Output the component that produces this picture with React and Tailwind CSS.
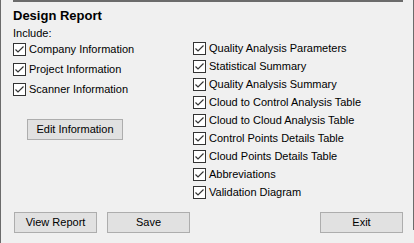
import React from 'react';

const font = { fontFamily: '"Liberation Sans", Arial, sans-serif' };

const Check = ({ label }) => (
  <div className="flex items-center gap-[3px]">
    <span className="flex items-center justify-center w-[13px] h-[13px] border border-[#333333] bg-white shrink-0">
      <svg width="11" height="11" viewBox="0 0 11 11">
        <path d="M1.5 5.5 L4 8 L9.5 2.5" fill="none" stroke="#333333" strokeWidth="1.2" />
      </svg>
    </span>
    <span className="text-[11px] text-black leading-none">{label}</span>
  </div>
);

const Button = ({ children, className }) => (
  <button className={`h-[21px] bg-[#e1e1e1] border border-[#adadad] text-[11px] text-black ${className}`}>
    {children}
  </button>
);

const leftItems = ['Company Information', 'Project Information', 'Scanner Information'];
const rightItems = [
  'Quality Analysis Parameters',
  'Statistical Summary',
  'Quality Analysis Summary',
  'Cloud to Control Analysis Table',
  'Cloud to Cloud Analysis Table',
  'Control Points Details Table',
  'Cloud Points Details Table',
  'Abbreviations',
  'Validation Diagram',
];

export default function App() {
  return (
    <div className="w-[414px] h-[243px] bg-[#f0f0f0] flex border-l border-[#6b6b6b] overflow-hidden" style={font}>
      <div className="flex-1 flex flex-col">
        {/* top rule */}
        <div className="ml-[12px] w-[390px] h-[2px] bg-[#6b6b6b]" />

        <div className="pl-[12px] mt-[6px] text-[13px] font-bold text-black leading-[16px]">Design Report</div>
        <div className="pl-[12px] mt-[4px] text-[11px] text-black leading-[11px]">Include:</div>

        <div className="flex">
          <div className="w-[192px] pl-[12px] flex flex-col">
            {leftItems.map((l) => (
              <div key={l} className="h-[20px] flex items-center">
                <Check label={l} />
              </div>
            ))}
            <Button className="ml-[14px] mt-[20px] w-[96px]">Edit Information</Button>
          </div>
          <div className="flex flex-col">
            {rightItems.map((l) => (
              <div key={l} className="h-[18px] flex items-center">
                <Check label={l} />
              </div>
            ))}
          </div>
        </div>

        <div className="flex mt-[11px] pl-[13px] pr-[10px]">
          <Button className="w-[83px]">View Report</Button>
          <Button className="w-[83px] ml-[10px]">Save</Button>
          <Button className="w-[83px] ml-auto">Exit</Button>
        </div>
      </div>
      <div className="w-px h-[230px] bg-[#6b6b6b]" />
    </div>
  );
}
